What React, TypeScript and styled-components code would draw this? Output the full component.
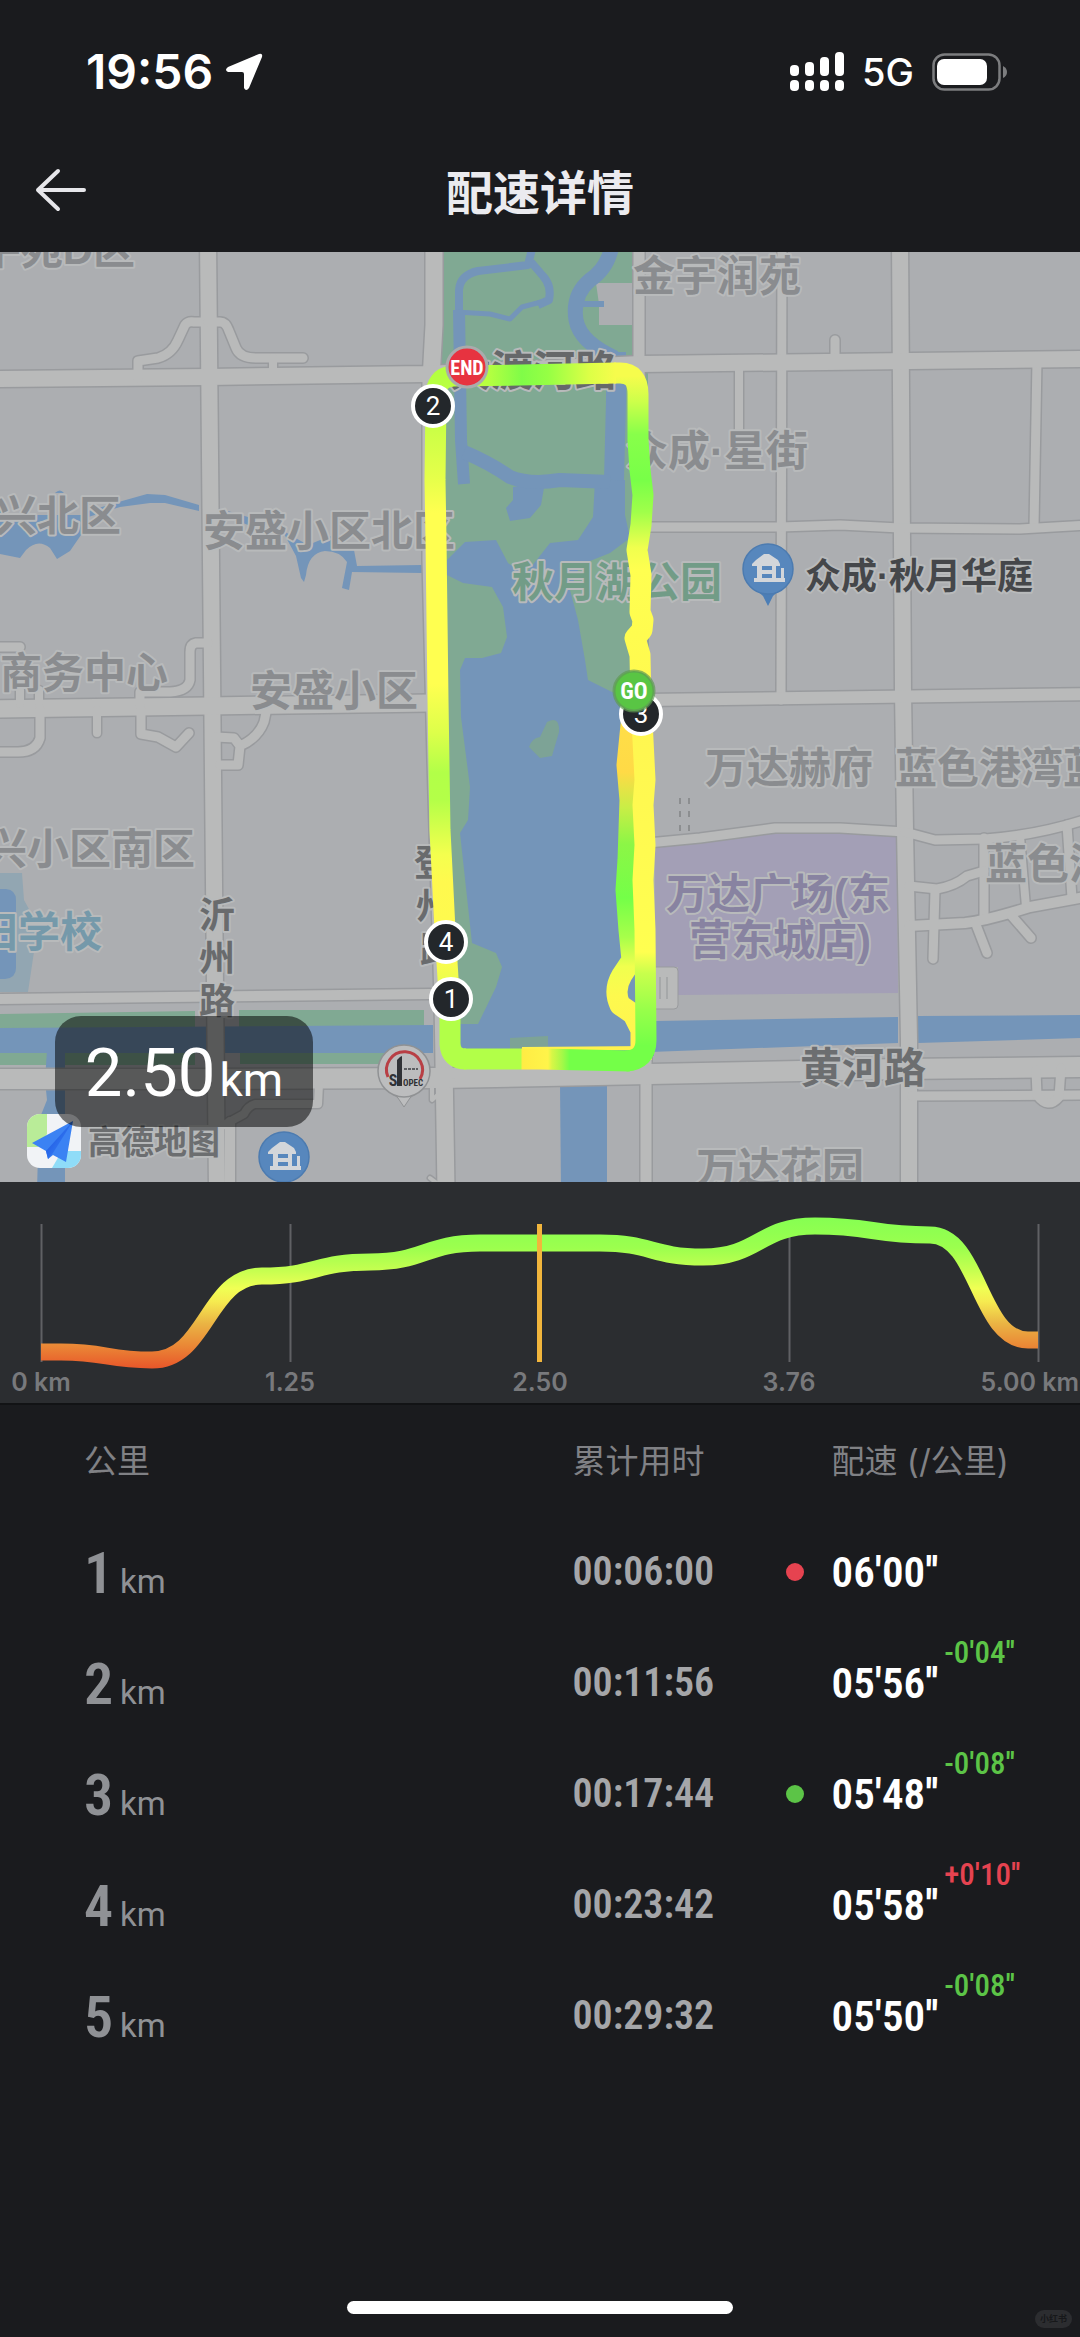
import React from "react";
import styled, { createGlobalStyle } from "styled-components";

const SANS = `Inter, "Noto Sans CJK SC", sans-serif`;
const NARROW = `"Liberation Sans Narrow", "Roboto Condensed", "Open Sans Condensed", Roboto, sans-serif`;

const GlobalStyle = createGlobalStyle`
  *, *::before, *::after { box-sizing: border-box; }
  body {
    margin: 0;
    background: #1a1b1e;
    color: #ffffff;
    font-family: ${SANS};
  }
`;

const Screen = styled.div`
  position: relative;
  display: flex;
  flex-direction: column;
  min-height: 100vh;
  overflow: hidden;
`;

const StatusBar = styled.header`
  display: flex;
  justify-content: space-between;
  align-items: center;
  height: 144px;
  padding: 0 72px 0 86px;
`;

const StatusGroup = styled.div<{ $gap: number }>`
  display: flex;
  align-items: center;
  gap: ${(p) => p.$gap}px;
`;

const Clock = styled.time`
  font-size: 48px;
  font-weight: 600;
  line-height: 56px;
`;

const Network = styled.span`
  font-size: 38px;
  font-weight: 500;
  line-height: 56px;
`;

const NavBar = styled.nav`
  display: grid;
  grid-template-columns: 140px 1fr 140px;
  align-items: center;
  height: 108px;
  padding-bottom: 16px;
`;

const BackButton = styled.button`
  display: flex;
  align-items: center;
  height: 80px;
  padding: 0 0 0 34px;
  border: 0;
  background: none;
  color: #e6e6ea;
`;

const Title = styled.h1`
  margin: 0;
  text-align: center;
  color: #ebebef;
  font-family: "Noto Sans CJK SC", sans-serif;
  font-size: 47px;
  font-weight: 700;
  line-height: 64px;
`;

const MapPanel = styled.section`
  position: relative;
  background: #acaeb1;
`;

const Drawing = styled.svg`
  display: block;
  width: 100%;
  height: auto;
`;

const DistanceBadge = styled.div`
  position: absolute;
  left: 55px;
  bottom: 55px;
  display: flex;
  align-items: baseline;
  justify-content: center;
  gap: 4px;
  width: 258px;
  height: 111px;
  border-radius: 26px;
  background: rgba(0, 0, 0, 0.52);
  font-family: Roboto, sans-serif;
  line-height: 114px;
`;

const BadgeValue = styled.span`
  font-size: 67px;
`;

const BadgeUnit = styled.span`
  font-size: 46px;
`;

const ChartPanel = styled.section`
  background: #2b2d30;
  border-bottom: 2px solid #121315;
`;

const Laps = styled.table`
  width: 100%;
  border-collapse: collapse;
  table-layout: fixed;
`;

const HeadCell = styled.th<{ $width?: string; $first?: boolean }>`
  width: ${(p) => p.$width || "auto"};
  height: 111px;
  padding: 0 0 0 ${(p) => (p.$first ? 84 : 0)}px;
  text-align: left;
  color: #808185;
  font-family: ${SANS};
  font-size: 33px;
  font-weight: 400;
  line-height: 40px;
`;

const Cell = styled.td`
  height: 111px;
  padding: 0;
  vertical-align: middle;
`;

const LapCell = styled(Cell)`
  padding: 12px 0 0 84px;
  color: #8f9195;
`;

const LapLabel = styled.div`
  display: flex;
  align-items: baseline;
  gap: 9px;
  line-height: 64px;
`;

const LapNumber = styled.span`
  width: 27px;
  font-family: ${NARROW};
  font-size: 58px;
  font-weight: 600;
`;

const LapUnit = styled.span`
  font-family: Roboto, sans-serif;
  font-size: 33px;
`;

const TimeCell = styled(Cell)`
  color: #a5a6a9;
  font-family: ${NARROW};
  font-size: 40px;
  font-weight: 600;
`;

const PaceBox = styled.div`
  position: relative;
  display: flex;
  align-items: center;
  gap: 6px;
  height: 111px;
  font-family: ${NARROW};
  font-weight: 600;
`;

const Dot = styled.i<{ $color: string }>`
  position: absolute;
  left: -46px;
  width: 18px;
  height: 18px;
  border-radius: 50%;
  background: ${(p) => p.$color};
`;

const Pace = styled.span`
  font-size: 43px;
  line-height: 48px;
`;

const Delta = styled.sup<{ $color: string }>`
  align-self: flex-start;
  margin-top: 10px;
  color: ${(p) => p.$color};
  font-size: 31px;
  font-weight: 500;
  line-height: 32px;
`;

const HomeIndicator = styled.div`
  align-self: center;
  width: 386px;
  height: 13px;
  margin-top: auto;
  margin-bottom: 23px;
  border-radius: 8px;
  background: #ffffff;
`;

const Watermark = styled.div`
  position: absolute;
  right: 8px;
  bottom: 9px;
  padding: 0 5px;
  border-radius: 9px;
  background: #2c2d30;
  color: #17181a;
  font-size: 9px;
  font-weight: 700;
  line-height: 18px;
`;

const GREEN = "#5cc447";
const RED = "#e64350";

const laps = [
  { km: 1, time: "00:06:00", pace: "06′00′′", dot: RED },
  { km: 2, time: "00:11:56", pace: "05′56′′", delta: "-0′04′′" },
  { km: 3, time: "00:17:44", pace: "05′48′′", delta: "-0′08′′", dot: GREEN },
  { km: 4, time: "00:23:42", pace: "05′58′′", delta: "+0′10′′" },
  { km: 5, time: "00:29:32", pace: "05′50′′", delta: "-0′08′′" },
];

/* ---------- map ---------- */

const roads: [string, number][] = [
  ["M208 240L214 883L217 1190", 16],
  ["M434 240V325L431 380V560L436 760L443 1000L446 1190", 17],
  ["M639 240V360L642 700L646 1060V1190", 11],
  ["M782 240L781 700", 9],
  ["M900 240L903 690L905 830L909 1040V1190", 16],
  ["M1037 360L1034 527", 9],
  ["M739 365V434", 8],
  ["M835 355V340", 9],
  ["M-9 379L208 377L425 374L640 364L1090 359", 16],
  ["M645 527H780L840 525L900 528L1020 529L1090 525", 9],
  ["M-9 709L208 706L430 703", 17],
  ["M645 700L1090 694", 12],
  ["M-9 999L430 994", 10],
  ["M-9 1079H208L440 1078L650 1074L900 1069L1090 1067", 20],
  ["M912 1096L1090 1095", 9],
  ["M1036 1070L1037 1095Q1048 1110 1059 1097L1061 1068", 9],
  ["M319 1084L318 1104H255Q248 1106 244 1114L222 1126", 8],
  ["M230 1122V1190", 10],
  ["M138 378V361L158 358Q172 354 178 340L185 325Q188 321 194 322H208", 9],
  ["M208 322H220Q226 322 229 331L236 348Q240 358 256 358H303", 9],
  ["M273 358V378", 8],
  ["M208 643H196Q190 644 190 652V680Q188 691 170 692H140V704", 9],
  ["M-9 647H20", 9],
  ["M20 704V690M39 704V690", 8],
  ["M40 710V738Q36 752 18 752H-9", 9],
  ["M97 710V733", 8],
  ["M141 710V734L158 737L176 747L189 733", 9],
  ["M267 708L264 722Q258 738 240 746L238 765H220M216 737L234 738L240 746", 9],
  ["M648 843L700 838L775 828H840L905 832", 9],
  ["M905 832L935 840L985 839Q1040 835 1090 818", 9],
  ["M984 838V918", 9],
  ["M1020 836L1026 907", 8],
  ["M1067 825L1072 898", 9],
  ["M909 926L965 923Q985 921 1030 907L1090 896", 10],
  ["M909 886L937 889Q955 886 967 876L984 871", 9],
  ["M935 890L933 959", 9],
  ["M975 922L987 953", 9],
  ["M1011 915L1031 938", 9],
  ["M454 1080L432 1100V1088M446 1190L430 1178", 4],
];

const water = [
  "M595 480H625V515L630 538L610 553L580 565L570 590L578 620L585 660L588 680L612 692L645 700V1056H450V1024H478L480 1020L496 987L502 967L496 953L472 943L460 833L468 820L470 787L461 717L460 670L465 658H482L501 653L507 637L503 607L492 587L463 583L447 575V560L465 542L496 540L508 563L525 575L535 562L550 543L578 540L593 517Z",
  "M513 487L545 482L541 505L530 518L510 521L506 508L513 500Z",
  "M560 1084H607V1190H561Z",
  "M655 1021L898 1017V1043L650 1052Z",
  "M918 1016L1080 1015V1038L918 1043Z",
  "M0 504L10 515H82L81 535L70 551L57 559L50 548Q38 538 26 550L20 558L0 554Z",
  "M82 513L115 503L147 494L165 495L199 505V511L165 503L150 503L120 507L82 519Z",
  "M55 493Q60 488 64 493ZM228 511L248 517V525L243 523L228 514Z",
  "M282 530L292 536L308 545L330 536L354 550L357 566L422 565V573L352 572L349 590L342 588L347 562Q340 551 325 551Q308 553 306 575L304 582L301 578L296 556Z",
  "M0 1028L433 1025V1053H0Z",
  "M47 1050H65V1190H37L39 1120L47 1100L45 1080Z",
  "M0 889H6Q16 890 16 900V968Q16 978 5 979H0Z",
];

const streams: [string, number][] = [
  ["M533 245L528 265L478 271Q460 275 459 290V400", 8],
  ["M456 312L490 314L510 319L522 307L541 302", 5],
  ["M531 262L543 276Q552 286 549 300L538 305", 8],
  ["M459 310L461 440L464 484", 12],
  ["M612 245Q608 268 590 280Q572 295 576 320Q580 342 615 358", 15],
  ["M583 304H604", 6],
  ["M616 352V400L614 480", 20],
  ["M464 452Q490 463 510 477Q530 485 560 480L610 482", 14],
];

type Place = {
  text: string;
  x: number;
  y: number;
  fill?: string;
  size?: number;
  anchor?: "start" | "middle" | "end";
};

const places: Place[] = [
  { text: "平苑D区", x: 135, y: 264, anchor: "end" },
  { text: "金宇润苑", x: 717, y: 291 },
  { text: "大渡河路", x: 533, y: 386, fill: "#66686a" },
  { text: "众成·星街", x: 717, y: 466 },
  { text: "兴北区", x: 121, y: 531, anchor: "end" },
  { text: "安盛小区北区", x: 329, y: 546 },
  { text: "秋月湖公园", x: 617, y: 597, fill: "#729c87" },
  { text: "众成·秋月华庭", x: 805, y: 589, fill: "#45474a", size: 36, anchor: "start" },
  { text: "商务中心", x: 0, y: 688, anchor: "start" },
  { text: "安盛小区", x: 334, y: 706 },
  { text: "万达赫府", x: 789, y: 783 },
  { text: "蓝色港湾蓝", x: 895, y: 783, anchor: "start" },
  { text: "蓝色港", x: 985, y: 879, anchor: "start" },
  { text: "兴小区南区", x: 195, y: 864, anchor: "end" },
  { text: "田学校", x: 102, y: 947, fill: "#7599aa", anchor: "end" },
  { text: "万达广场(东", x: 778, y: 909, fill: "#8883a1" },
  { text: "营东城店)", x: 780, y: 955, fill: "#8883a1" },
  { text: "黄河路", x: 863, y: 1083, fill: "#6c6e70" },
  { text: "万达花园", x: 780, y: 1183 },
  { text: "沂", x: 217, y: 928, fill: "#696b6d", size: 36 },
  { text: "州", x: 217, y: 971, fill: "#696b6d", size: 36 },
  { text: "路", x: 217, y: 1014, fill: "#696b6d", size: 36 },
  { text: "登", x: 432, y: 876, fill: "#696b6d", size: 36 },
  { text: "州", x: 434, y: 919, fill: "#696b6d", size: 36 },
  { text: "路", x: 438, y: 963, fill: "#696b6d", size: 36 },
];

const MapLabel = styled.text`
  font-family: "Liberation Sans", "Noto Sans CJK SC", sans-serif;
  font-weight: 700;
  paint-order: stroke;
  stroke: #b8babb;
  stroke-width: 4px;
  stroke-linejoin: round;
`;

const PinText = styled.text`
  fill: #ffffff;
  text-anchor: middle;
  font-family: Roboto, sans-serif;
`;

const FlagText = styled(PinText)`
  font-family: ${NARROW};
  font-weight: 700;
`;

function Stops({ list }: { list: [number, string][] }) {
  return (
    <>
      {list.map(([offset, color]) => (
        <stop key={offset} offset={offset} stopColor={color} />
      ))}
    </>
  );
}

function HomePin({ x, y, tail }: { x: number; y: number; tail?: boolean }) {
  return (
    <g transform={`translate(${x} ${y})`}>
      {tail && <path d="M-13 20L-5 27L0 37L5 27L13 20Z" fill="#4c7eb6" />}
      <circle r="25" fill="#5787bd" stroke="#4c7bb0" strokeWidth="1.5" />
      <g fill="#d3d6da">
        <path d="M-16 -5L-12 -9L-4 -15H1L10 -9L12 -5V-3H8V9H13V-1H16V9H17V13H-14V9H-11V-3H-16Z" />
        <path d="M-6 -3H4V1H-6ZM-6 5H4V9H-6Z" fill="#5787bd" />
      </g>
    </g>
  );
}

function KmPin({ x, y, n }: { x: number; y: number; n: number }) {
  return (
    <g>
      <circle cx={x} cy={y} r="20" fill="#23272b" stroke="#ffffff" strokeWidth="4" />
      <PinText x={x} y={y + 9} fontSize="26">{n}</PinText>
    </g>
  );
}

function RouteMap() {
  return (
    <Drawing viewBox="0 252 1080 930" role="img" aria-label="路线地图">
      <defs>
        <linearGradient id="west" gradientUnits="userSpaceOnUse" x1="0" y1="376" x2="0" y2="1060">
          <Stops list={[[0, "#b4ff40"], [0.08, "#ccff46"], [0.15, "#e6ff4a"], [0.2, "#ffff50"], [0.45, "#ffff50"], [0.52, "#deff4a"], [0.58, "#b2ff48"], [0.62, "#b4ff48"], [0.7, "#f4ff4e"], [0.74, "#fff94e"], [0.85, "#fdfb4e"], [0.9, "#e4ff4c"], [0.94, "#b2ff48"], [1, "#b2ff48"]]} />
        </linearGradient>
        <linearGradient id="north" gradientUnits="userSpaceOnUse" x1="436" y1="0" x2="640" y2="0">
          <Stops list={[[0, "#c0ff40"], [0.25, "#b8ff40"], [0.42, "#80fc48"], [0.55, "#96ff44"], [0.75, "#dcff46"], [0.88, "#f6fc4c"], [1, "#f6fc4c"]]} />
        </linearGradient>
        <linearGradient id="northEast" gradientUnits="userSpaceOnUse" x1="0" y1="376" x2="0" y2="700">
          <Stops list={[[0, "#f6fc4c"], [0.08, "#ccff4a"], [0.18, "#88ff4a"], [0.32, "#78ff48"], [0.42, "#a0ff4a"], [0.53, "#f0ff4e"], [0.6, "#ffff50"], [1, "#fff94e"]]} />
        </linearGradient>
        <linearGradient id="southEast" gradientUnits="userSpaceOnUse" x1="0" y1="700" x2="0" y2="1060">
          <Stops list={[[0, "#fff550"], [0.7, "#ffff50"], [0.76, "#c8ff4c"], [0.86, "#98ff4a"], [0.96, "#74ff48"], [1, "#74ff48"]]} />
        </linearGradient>
        <linearGradient id="inner" gradientUnits="userSpaceOnUse" x1="0" y1="700" x2="0" y2="1060">
          <Stops list={[[0, "#ffe048"], [0.2, "#ffda46"], [0.3, "#c8ee46"], [0.4, "#8cf646"], [0.55, "#74ff48"], [0.66, "#a8ff4a"], [0.74, "#f0ff4e"], [0.82, "#fdf94e"], [1, "#fff24e"]]} />
        </linearGradient>
        <linearGradient id="south" gradientUnits="userSpaceOnUse" x1="450" y1="0" x2="646" y2="0">
          <Stops list={[[0, "#b2ff48"], [0.36, "#b2ff48"], [0.37, "#ffec44"], [0.5, "#fff44a"], [0.52, "#d8f646"], [0.57, "#a8f848"], [0.61, "#74ff48"], [1, "#74ff48"]]} />
        </linearGradient>
        <linearGradient id="plane" x1="0" y1="0" x2="1" y2="1">
          <Stops list={[[0, "#1747d8"], [1, "#3f92ff"]]} />
        </linearGradient>
        <clipPath id="tile"><rect x="27" y="1114" width="54" height="54" rx="13" /></clipPath>
      </defs>

      <rect x="0" y="240" width="1080" height="950" fill="#acaeb1" />
      <path d="M655 847L700 842L777 832H840L897 836L898 993L678 995V967H655Z" fill="#a39fb6" />
      <path d="M442 240H634V358H648V560L654 1056H440V560Z" fill="#80a993" />
      <path d="M596 283H633V325H599V304Z" fill="#acaeb1" />
      <path d="M0 873H22L24 900L35 920V945L28 992H0Z" fill="#92a6b2" />
      <path d="M0 1014L195 1011V1028H0ZM239 1010H424V1028H239ZM0 1052H47V1065H0ZM65 1052H195V1065H65ZM240 1052H385V1064H240Z" fill="#80a993" />
      <g fill="#7495b9">{water.map((d) => <path key={d} d={d} />)}</g>
      <path d="M529 747Q532 738 540 737L547 722Q560 715 559 732L552 756L540 758Z" fill="#7da396" />
      <path d="M510 1038L548 1036V1050H510Z" fill="#7da396" />
      <g stroke="#7495b9" fill="none" strokeLinejoin="round">
        {streams.map(([d, w]) => <path key={d} d={d} strokeWidth={w} />)}
      </g>

      <g fill="none" strokeLinejoin="round" strokeLinecap="round">
        <g stroke="#999b9e">
          {roads.map(([d, w]) => <path key={d} d={d} strokeWidth={w + 3} />)}
        </g>
        <g stroke="#b9baba">
          {roads.map(([d, w]) => <path key={d} d={d} strokeWidth={w} />)}
        </g>
      </g>
      <rect x="650" y="967" width="28" height="42" rx="4" fill="#b9baba" stroke="#999b9e" />
      <path d="M660 977V999M667 977V999" stroke="#a0a2a4" strokeWidth="1.5" />
      <path d="M680 798V804M689 798V804M680 811V817M689 811V817M680 825V831M689 825V831" stroke="#8c8e90" strokeWidth="2" />

      {places.map((p) => (
        <MapLabel
          key={p.text + p.x}
          x={p.x}
          y={p.y}
          fill={p.fill || "#8a8c8f"}
          fontSize={p.size || 42}
          textAnchor={p.anchor || "middle"}
        >
          {p.text}
        </MapLabel>
      ))}

      <HomePin x={768} y={569} tail />
      <HomePin x={284} y={1157} />

      <g>
        <path d="M391 1092L398 1098L404 1107L410 1098L417 1092Z" fill="#bcbdbe" stroke="#909294" />
        <circle cx="404" cy="1071" r="26" fill="#bcbdbe" stroke="#909294" strokeWidth="1.5" />
        <path d="M388 1077A18 18 0 1 1 420 1079" fill="none" stroke="#b83f45" strokeWidth="3" />
        <path d="M397 1086V1060L400 1057L402 1056V1086Z" fill="#303236" />
        <path d="M404 1069H418" stroke="#5c5e62" strokeWidth="2" strokeDasharray="3 1" />
        <FlagText x="393" y="1086" fontSize="16" style={{ fill: "#303236" }}>S</FlagText>
        <FlagText x="413" y="1086" fontSize="9" style={{ fill: "#303236" }}>OPEC</FlagText>
      </g>

      <g fill="none" strokeWidth="21" strokeLinejoin="round">
        <path stroke="url(#inner)" d="M634 704L631 725L627 765L630 800L628 860L626 890L629 930L632 960L622 975Q613 990 620 1005L633 1014L641 1030V1060" />
        <path stroke="#fff24e" strokeWidth="4" d="M522 1049L650 1048" />
        <path stroke="url(#northEast)" d="M614 373H620Q638 373 638 394V440L640 470L643 495L641 525L637 550L641 575L640 612L643 620L642 630L635 638L640 655L641 704" />
        <path stroke="url(#southEast)" d="M641 700L643 740L645 780L643 805L645 845L643 880L645 930L646 1040Q646 1060 626 1061" />
        <path stroke="url(#south)" d="M464 1059L540 1059L630 1061" />
        <path stroke="url(#west)" d="M452 376Q436 378 436 396L435 480L436 540L438 700L440 830L445 930L450 1010V1044Q451 1059 466 1059" />
        <path stroke="url(#north)" d="M450 376L520 375L616 373" />
      </g>

      <KmPin x={433} y={406} n={2} />
      <KmPin x={641} y={714} n={3} />
      <KmPin x={446} y={942} n={4} />
      <KmPin x={451} y={999} n={1} />
      <circle cx="467" cy="367" r="20" fill="#e73340" stroke="#a9abac" strokeWidth="3" />
      <FlagText x="467" y="375" fontSize="20">END</FlagText>
      <circle cx="634" cy="691" r="20" fill="#59c544" stroke="#5f9a55" strokeWidth="3" strokeOpacity="0.7" />
      <FlagText x="634" y="699" fontSize="23">GO</FlagText>

      <g clipPath="url(#tile)">
        <rect x="27" y="1114" width="54" height="54" fill="#f1f3f6" />
        <path d="M27 1114H47V1134L38 1147H27Z" fill="#b9ec98" />
        <path d="M81 1151H62L52 1168H81Z" fill="#8fdcf8" />
        <path d="M73 1121L32 1143L46 1151L48 1159L53 1155L66 1162Z" fill="#3b82f3" />
        <path d="M73 1121L46 1151L48 1159L53 1153Z" fill="url(#plane)" />
      </g>
      <MapLabel x="88" y="1154" fontSize="33" fill="#6c6e70">高德地图</MapLabel>
    </Drawing>
  );
}

/* ---------- pace chart ---------- */

const curve: [number, number][] = [
  [41, 1352], [61, 1352], [152, 1360], [262, 1276], [370, 1262], [480, 1243],
  [600, 1243], [703, 1257], [815, 1226], [930, 1235], [1028, 1340], [1038, 1340],
];

function smooth(points: [number, number][]) {
  return points
    .slice(1)
    .map(([x, y], i) => {
      const [px, py] = points[i];
      const mx = (px + x) / 2;
      return `C${mx} ${py} ${mx} ${y} ${x} ${y}`;
    })
    .join("");
}

const paceLine = `M${curve[0].join(" ")}${smooth(curve)}`;

const AxisText = styled.text`
  fill: #78797c;
  font-family: Inter, sans-serif;
  font-size: 25px;
  font-weight: 600;
`;

const ticks: [number, string][] = [[41, "0 km"], [290, "1.25"], [540, "2.50"], [789, "3.76"], [1038, "5.00 km"]];

function PaceChart() {
  return (
    <Drawing viewBox="0 1182 1080 221" role="img" aria-label="配速曲线">
      <defs>
        <linearGradient id="pace" gradientUnits="userSpaceOnUse" x1="0" y1="1218" x2="0" y2="1368">
          <Stops list={[[0, "#86ff52"], [0.2, "#9cff4e"], [0.35, "#c6ff50"], [0.47, "#f0ff54"], [0.56, "#f6ea50"], [0.7, "#eab544"], [0.85, "#ea8836"], [1, "#e8572a"]]} />
        </linearGradient>
      </defs>
      {ticks.map(([x]) => (
        <path key={x} d={`M${x + 0.5} 1224V1362`} stroke="#606164" strokeWidth="2" />
      ))}
      <path d={paceLine} fill="none" stroke="url(#pace)" strokeWidth="17" />
      <rect x="537" y="1224" width="5" height="138" fill="#f1b53c" />
      {ticks.map(([x, label], i) => (
        <AxisText key={label} x={i === 4 ? 1079 : x} y="1391" textAnchor={i === 4 ? "end" : "middle"}>
          {label}
        </AxisText>
      ))}
    </Drawing>
  );
}

/* ---------- status icons ---------- */

function LocationIcon() {
  return (
    <svg width="38" height="38" viewBox="0 0 38 38" aria-hidden="true">
      <path d="M34 1Q38 0 37 4L24 35Q21 39 19 35V21Q19 19 17 19H3Q-1 17 3 14Z" fill="#fff" />
    </svg>
  );
}

function SignalIcon() {
  const tops = [13, 10, 5, 0];
  return (
    <svg width="54" height="40" viewBox="0 0 54 40" aria-hidden="true" fill="#fff">
      {tops.map((t, i) => (
        <g key={t}>
          <rect x={i * 15} y={t} width="9" height={24 - t} rx="4" />
          <rect x={i * 15} y="28" width="9" height="11" rx="4" />
        </g>
      ))}
    </svg>
  );
}

function BatteryIcon() {
  return (
    <svg width="76" height="38" viewBox="0 0 76 38" aria-hidden="true">
      <rect x="1.500" y="1.500" width="66" height="35" rx="11" fill="none" stroke="#7c7d7f" strokeWidth="2.500" />
      <rect x="5" y="6" width="50" height="26" rx="7" fill="#fff" />
      <path d="M71 13Q75 15 75 19Q75 23 71 25Z" fill="#7c7d7f" />
    </svg>
  );
}

function BackIcon() {
  return (
    <svg width="54" height="44" viewBox="0 0 54 44" fill="none" stroke="currentColor" strokeWidth="4" strokeLinecap="round" strokeLinejoin="round" aria-hidden="true">
      <path d="M50 22H4M24 3L4 22L24 41" />
    </svg>
  );
}

export default function App() {
  return (
    <Screen>
      <GlobalStyle />
      <StatusBar>
        <StatusGroup $gap={12}>
          <Clock>19:56</Clock>
          <LocationIcon />
        </StatusGroup>
        <StatusGroup $gap={18}>
          <SignalIcon />
          <Network>5G</Network>
          <BatteryIcon />
        </StatusGroup>
      </StatusBar>
      <NavBar>
        <BackButton type="button" aria-label="返回">
          <BackIcon />
        </BackButton>
        <Title>配速详情</Title>
      </NavBar>
      <MapPanel>
        <RouteMap />
        <DistanceBadge>
          <BadgeValue>2.50</BadgeValue>
          <BadgeUnit>km</BadgeUnit>
        </DistanceBadge>
      </MapPanel>
      <ChartPanel>
        <PaceChart />
      </ChartPanel>
      <Laps>
        <thead>
          <tr>
            <HeadCell $width="53%" $first>公里</HeadCell>
            <HeadCell $width="24%">累计用时</HeadCell>
            <HeadCell>配速 (/公里)</HeadCell>
          </tr>
        </thead>
        <tbody>
          {laps.map((lap) => (
            <tr key={lap.km}>
              <LapCell>
                <LapLabel>
                  <LapNumber>{lap.km}</LapNumber>
                  <LapUnit>km</LapUnit>
                </LapLabel>
              </LapCell>
              <TimeCell>{lap.time}</TimeCell>
              <Cell>
                <PaceBox>
                  {lap.dot && <Dot $color={lap.dot} />}
                  <Pace>{lap.pace}</Pace>
                  {lap.delta && (
                    <Delta $color={lap.delta.startsWith("+") ? RED : GREEN}>{lap.delta}</Delta>
                  )}
                </PaceBox>
              </Cell>
            </tr>
          ))}
        </tbody>
      </Laps>
      <HomeIndicator />
      <Watermark>小红书</Watermark>
    </Screen>
  );
}
